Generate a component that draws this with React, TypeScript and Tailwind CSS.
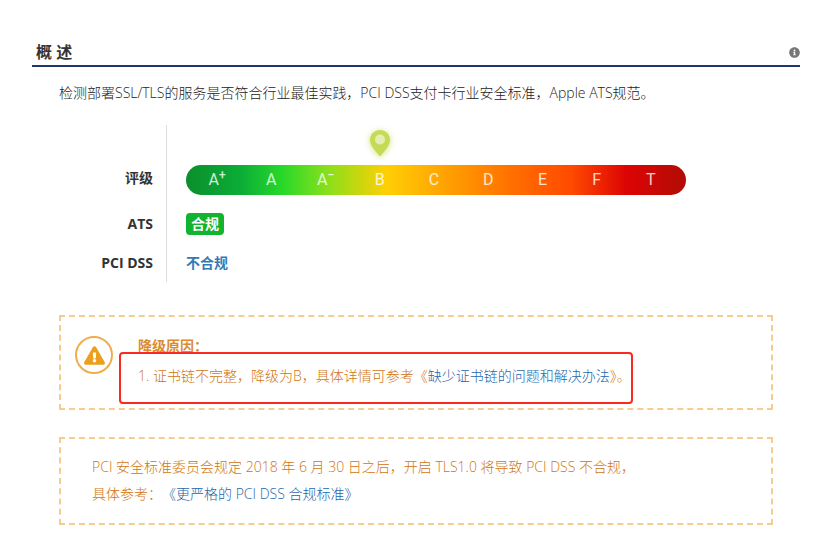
import { FaExclamationTriangle, FaInfoCircle } from 'react-icons/fa'

const grades = [
  { letter: 'A', sign: '+' },
  { letter: 'A' },
  { letter: 'A', sign: '−' },
  { letter: 'B' },
  { letter: 'C' },
  { letter: 'D' },
  { letter: 'E' },
  { letter: 'F' },
  { letter: 'T' },
]

function Pin() {
  return (
    <svg
      viewBox="0 0 20 27"
      className="w-5 h-[27px] drop-shadow-[0_1px_3px_rgba(197,219,87,0.8)]"
      aria-hidden="true"
    >
      <path
        d="M10 0C4.5 0 0 4.4 0 9.8c0 3.4 1.6 6.3 4 9.5L10 26.5l6-7.2c2.4-3.2 4-6.1 4-9.5C20 4.4 15.5 0 10 0z"
        fill="#c5db57"
      />
      <circle cx="10" cy="9.5" r="5" fill="#e4eeb0" />
    </svg>
  )
}

export default function App() {
  return (
    <main className="min-h-screen bg-white pt-10 pl-8 pr-[29px] pb-2 text-sm font-light text-[#222] font-['Open_Sans','Noto_Sans_CJK_SC',sans-serif]">
      {/* Header */}
      <header className="flex items-center justify-between border-b-2 border-[#1f3769] pb-[1px] pl-1">
        <h1 className="text-base leading-6 font-bold text-[#333]">概 述</h1>
        <button aria-label="说明" className="text-[#777]">
          <FaInfoCircle className="size-[11px]" />
        </button>
      </header>

      <div className="px-[27px]">
        <p className="mt-4 leading-5">
          检测部署SSL/TLS的服务是否符合行业最佳实践，PCI DSS支付卡行业安全标准，Apple ATS规范。
        </p>

        {/* Results */}
        <dl className="mt-[22px] text-[#333]">
          <div className="flex">
            <dt className="w-[107px] shrink-0 flex items-end justify-end pr-[13px] pb-4 font-bold">评级</dt>
            <dd className="flex-1 border-l border-[#ddd] pl-[19px] pt-[5px] pb-[9px]">
              <div className="max-w-[500px]">
                <div className="grid grid-cols-9 h-[35px] pl-1 pr-2">
                  <div className="col-start-4 flex justify-center">
                    <Pin />
                  </div>
                </div>
                <ol className="grid grid-cols-9 items-center h-[30px] rounded-full pl-1 pr-2 text-center text-base font-normal text-white/80 font-['Roboto',sans-serif] bg-[linear-gradient(90deg,#0a8f2c_0%,#0bad37_11%,#26d82a_19%,#85e01b_28%,#ffcf05_40%,#ff9a00_54%,#ff7000_65%,#ff4a00_77%,#dd0404_88%,#b20c04_100%)]">
                  {grades.map(g => (
                    <li key={g.letter + (g.sign ?? '')}>
                      {g.letter}
                      {g.sign && <sup className="text-xs font-medium">{g.sign}</sup>}
                    </li>
                  ))}
                </ol>
              </div>
            </dd>
          </div>
          <div className="flex">
            <dt className="w-[107px] shrink-0 flex items-center justify-end pr-[13px] font-bold">ATS</dt>
            <dd className="flex-1 border-l border-[#ddd] pl-[19px] py-[9px] flex">
              <span className="rounded bg-[#12b32f] text-white font-bold px-[5px] leading-[22px]">合规</span>
            </dd>
          </div>
          <div className="flex">
            <dt className="w-[107px] shrink-0 flex items-center justify-end pr-[13px] font-bold">PCI DSS</dt>
            <dd className="flex-1 border-l border-[#ddd] pl-[19px] py-[9px] leading-5">
              <a href="#pci" className="text-[#337ab7] font-bold">不合规</a>
            </dd>
          </div>
        </dl>

        {/* Downgrade reason */}
        <section className="mt-[33px] flex border-2 border-dashed border-[#f5cd90] text-[#d07510] pl-[14px] pt-[19px] pb-1">
          <div className="size-[38px] shrink-0 rounded-full border-2 border-[#f0ad4e] flex items-center justify-center">
            <FaExclamationTriangle className="size-[21px] text-[#ec9f1f]" />
          </div>
          <div className="pl-[6px]">
            <h2 className="pl-[19px] leading-5 font-bold underline text-[#d98c30]">降级原因：</h2>
            <p className="relative -mt-1 border-2 border-[#fb2a20] rounded-sm pl-[17px] pt-3 pb-4 leading-5">
              1. 证书链不完整，降级为B，具体详情可参考《<a href="#chain" className="text-[#1f66a8]">缺少证书链的问题和解决办法</a>》。
            </p>
          </div>
        </section>

        {/* PCI notice */}
        <section className="mt-[27px] border-2 border-dashed border-[#f5cd90] text-[#d07510] pl-[31px] pt-[14px] pb-4 leading-[27px]">
          <p>PCI 安全标准委员会规定 2018 年 6 月 30 日之后，开启 TLS1.0 将导致 PCI DSS 不合规，</p>
          <p className="[text-spacing-trim:space-all]">
            具体参考：<a href="#pci-standard" className="text-[#1f66a8]">《更严格的 PCI DSS 合规标准》</a>
          </p>
        </section>
      </div>
    </main>
  )
}
